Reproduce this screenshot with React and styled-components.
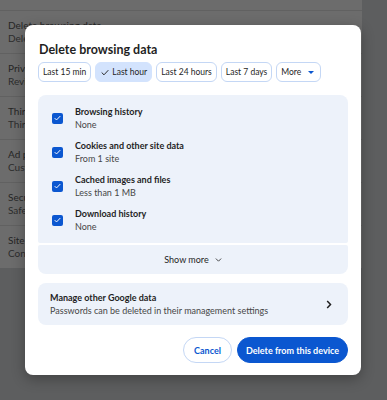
import styled, { createGlobalStyle } from "styled-components";

const GlobalStyle = createGlobalStyle`
  body {
    margin: 0;
    font-family: Lato, "Noto Sans", sans-serif;
  }
`;

const settingsRows = [
  ["Delete browsing data", "Delete history, cookies, cache, and more"],
  ["Privacy Guide", "Review key privacy and security controls"],
  ["Third-party cookies", "Third-party cookies are blocked in Incognito mode"],
  ["Ad privacy", "Customize the info used by sites to show you ads"],
  ["Security", "Safe Browsing (protection from dangerous sites)"],
  ["Site settings", "Controls what information sites can use and show"],
];

const ranges = ["Last 15 min", "Last hour", "Last 24 hours", "Last 7 days"];

const dataTypes = [
  ["Browsing history", "None"],
  ["Cookies and other site data", "From 1 site"],
  ["Cached images and files", "Less than 1 MB"],
  ["Download history", "None"],
];

export default function App() {
  return (
    <>
      <GlobalStyle />
      <Page>
        <Settings>
          {settingsRows.map(([title, sub]) => (
            <SettingRow key={title}>
              <span>{title}</span>
              <small>{sub}</small>
            </SettingRow>
          ))}
        </Settings>

        <Dialog>
          <Title>Delete browsing data</Title>
          <Chips>
            {ranges.map((r) => (
              <Chip key={r} selected={r === "Last hour"}>
                {r === "Last hour" && (
                  <svg width="8" height="7" viewBox="0 0 12 10">
                    <path d="M1 5l3.5 3.5L11 1.5" fill="none" stroke="#1f1f1f" strokeWidth="1.4" />
                  </svg>
                )}
                {r}
              </Chip>
            ))}
            <Chip more>
              More
              <svg width="6" height="3" viewBox="0 0 8 4">
                <path d="M0 0h8L4 4z" fill="#0b57d0" />
              </svg>
            </Chip>
          </Chips>

          <Panel>
            <Items>
              {dataTypes.map(([title, sub]) => (
                <Item key={title}>
                  <Check>
                    <svg width="7" height="6" viewBox="0 0 10 8">
                      <path d="M1 4.2l2.6 2.6L9 1.2" fill="none" stroke="#fff" strokeWidth="1.4" />
                    </svg>
                  </Check>
                  <ItemText>
                    <strong>{title}</strong>
                    <span>{sub}</span>
                  </ItemText>
                </Item>
              ))}
            </Items>
            <ShowMore>
              Show more
              <svg width="7" height="4" viewBox="0 0 8 5">
                <path d="M0.7 0.7L4 4l3.3-3.3" fill="none" stroke="#1f1f1f" strokeWidth="1" />
              </svg>
            </ShowMore>
          </Panel>

          <ManageCard>
            <ItemText>
              <strong>Manage other Google data</strong>
              <span>Passwords can be deleted in their management settings</span>
            </ItemText>
            <svg width="6" height="9" viewBox="0 0 6 9">
              <path d="M1.2 1l3.3 3.5L1.2 8" fill="none" stroke="#1f1f1f" strokeWidth="1.5" />
            </svg>
          </ManageCard>

          <Actions>
            <Button>Cancel</Button>
            <Button primary>Delete from this device</Button>
          </Actions>
        </Dialog>
      </Page>
    </>
  );
}

const Page = styled.div`
  position: relative;
  width: 387px;
  height: 400px;
  overflow: hidden;
  background: #5d5e5f;
`;

const Settings = styled.div`
  width: 362px;
  padding-top: 10px;
  background: #6c6c6c;
`;

const SettingRow = styled.div`
  height: 43px;
  border-top: 1px solid #616161;
  padding: 8px 8px 0;
  box-sizing: border-box;
  display: flex;
  flex-direction: column;
  color: #262626;
  font-size: 10px;
  line-height: 13px;
  white-space: nowrap;
  overflow: hidden;
  small {
    font-size: 10px;
    color: #2c2c2c;
  }
`;

const Dialog = styled.div`
  position: absolute;
  left: 25px;
  top: 25px;
  width: 336px;
  height: 350px;
  box-sizing: border-box;
  padding: 14px 13px 11px;
  background: #fff;
  border-radius: 8px;
  box-shadow: 0 4px 14px rgba(0, 0, 0, 0.3);
  display: flex;
  flex-direction: column;
  color: #1f1f1f;
`;

const Title = styled.h2`
  margin: 0 0 0 1px;
  font-size: 12.5px;
  font-weight: 700;
  line-height: 22px;
`;

const Chips = styled.div`
  display: flex;
  gap: 4px;
  margin-top: 1px;
`;

const Chip = styled.div`
  height: 20px;
  box-sizing: border-box;
  padding: 0 ${(p) => (p.more ? "6px" : "4px")} 0 ${(p) => (p.selected ? "5px" : "4px")};
  display: flex;
  align-items: center;
  gap: ${(p) => (p.more ? "7px" : "3px")};
  white-space: nowrap;
  border-radius: 6px;
  font-size: 8.5px;
  border: 1px solid ${(p) => (p.selected ? "#d3e3fd" : "#c4d7f5")};
  background: ${(p) => (p.selected ? "#d3e3fd" : "#fff")};
  color: #1f1f1f;
`;

const Panel = styled.div`
  margin-top: 13px;
  display: flex;
  flex-direction: column;
  gap: 2px;
`;

const Items = styled.div`
  background: #edf2fa;
  border-radius: 8px 8px 2px 2px;
  padding: 6px 0;
`;

const Item = styled.div`
  height: 34px;
  display: flex;
  align-items: center;
  padding-left: 14px;
  gap: 12px;
`;

const Check = styled.div`
  width: 11px;
  height: 11px;
  border-radius: 2px;
  background: #0b57d0;
  display: flex;
  align-items: center;
  justify-content: center;
`;

const ItemText = styled.div`
  display: flex;
  flex-direction: column;
  white-space: nowrap;
  strong {
    font-size: 9px;
    font-weight: 700;
    line-height: 13px;
    color: #1f1f1f;
  }
  span {
    font-size: 9px;
    line-height: 13px;
    color: #474747;
  }
`;

const ShowMore = styled.div`
  height: 29px;
  background: #edf2fa;
  border-radius: 2px 2px 8px 8px;
  display: flex;
  align-items: center;
  justify-content: center;
  gap: 6px;
  font-size: 9px;
`;

const ManageCard = styled.div`
  margin-top: 9px;
  height: 42px;
  box-sizing: border-box;
  background: #edf2fa;
  border-radius: 8px;
  display: flex;
  align-items: center;
  justify-content: space-between;
  padding: 0 16px 0 12px;
`;

const Actions = styled.div`
  margin-top: 12px;
  display: flex;
  justify-content: flex-end;
  gap: 5px;
`;

const Button = styled.button`
  height: 26px;
  padding: 0 ${(p) => (p.primary ? "8px" : "10px")};
  border-radius: 13px;
  font-family: inherit;
  font-size: 9px;
  font-weight: 700;
  border: 1px solid ${(p) => (p.primary ? "#0b57d0" : "#c4d7f5")};
  background: ${(p) => (p.primary ? "#0b57d0" : "#fff")};
  color: ${(p) => (p.primary ? "#fff" : "#0b57d0")};
`;
